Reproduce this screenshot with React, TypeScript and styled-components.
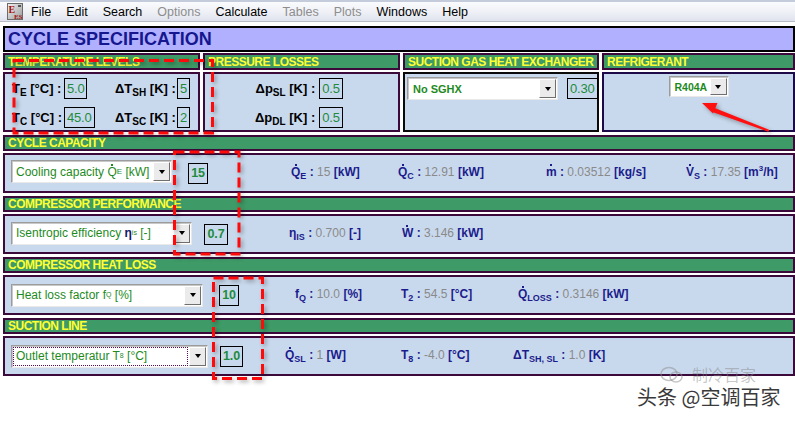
import React from "react";
import styled, { createGlobalStyle } from "styled-components";

const C = {
  purple: "#3b0a3b",
  green: "#3e9a66",
  yellow: "#ffff33",
  body: "#c9d9ed",
  navy: "#1c1c8c",
  val: "#1e8b3c",
  drop: "#1e8a1e",
  gray: "#8a8a8a",
};

const GlobalStyle = createGlobalStyle`
  html, body { margin: 0; padding: 0; background: #fff; }
  body { font-family: "Liberation Sans", Arial, sans-serif; }
`;

const Page = styled.div`
  position: relative;
  width: 795px;
  height: 421px;
  overflow: hidden;
  background: #fff;
`;

const MenuBar = styled.div`
  height: 22px;
  box-sizing: border-box;
  display: flex;
  align-items: center;
  padding-left: 7px;
  gap: 15px;
  background: linear-gradient(#fafbfd, #eef0f6 55%, #dfe3ed);
  border-top: 2px solid #c4ccdb;
  border-bottom: 1px solid #b9bdc8;
`;

const LogoBox = styled.svg`
  width: 16px;
  height: 17px;
  flex-shrink: 0;
  margin-right: -7px;
`;

const MenuItem = styled.span<{ $disabled?: boolean }>`
  font-size: 12.5px;
  color: ${(p) => (p.$disabled ? "#8d8d8d" : "#000")};
  white-space: nowrap;
`;

const Main = styled.div`
  display: flex;
  flex-direction: column;
  gap: 1px;
  width: 792px;
  padding: 4px 0 0 3px;
`;

const TitleBar = styled.div`
  height: 26px;
  box-sizing: border-box;
  border: 2px solid #000;
  background: #b0b0ff;
  display: flex;
  align-items: center;
  padding-left: 3px;
  font-size: 18px;
  font-weight: bold;
  color: #16168e;
`;

const Rows = styled.div`
  display: flex;
  flex-direction: column;
  gap: 3px;
`;

const TopRow = styled.div`
  display: grid;
  grid-template-columns: 197px 197px 196px 1fr;
  column-gap: 3px;
`;

const Section = styled.section`
  display: flex;
  flex-direction: column;
  gap: 2px;
  min-width: 0;
`;

const SectionHeader = styled.div<{ $h: number }>`
  height: ${(p) => p.$h}px;
  box-sizing: border-box;
  border: 2px solid ${C.purple};
  background: ${C.green};
  color: ${C.yellow};
  font-size: 12px;
  font-weight: bold;
  letter-spacing: -0.5px;
  padding-left: 3px;
  display: flex;
  align-items: center;
  white-space: nowrap;
  overflow: hidden;
`;

const PanelBody = styled.div<{ $h: number; $border?: string }>`
  height: ${(p) => p.$h}px;
  box-sizing: border-box;
  border: 2px solid ${(p) => p.$border || C.purple};
  background: ${C.body};
`;

const TempGrid = styled.div`
  display: grid;
  grid-template-columns: 52px 51px 62px auto;
  row-gap: 8px;
  align-items: center;
  padding: 4px 0 0 7px;
`;

const PressGrid = styled.div`
  display: grid;
  grid-template-columns: auto auto;
  column-gap: 4px;
  row-gap: 8px;
  align-items: center;
  justify-content: start;
  padding: 4px 0 0 50px;
`;

const FieldLabel = styled.span<{ $right?: boolean }>`
  font-size: 13px;
  font-weight: bold;
  color: #000;
  white-space: nowrap;
  justify-self: ${(p) => (p.$right ? "end" : "start")};
`;

const Sub = styled.span<{ $size?: number }>`
  font-size: ${(p) => p.$size || 9}px;
  vertical-align: -3px;
  line-height: 0;
`;

const Sup = styled.span`
  font-size: 8px;
  vertical-align: 5px;
  line-height: 0;
`;

const Dot = styled.span`
  position: relative;
  display: inline-block;
  &::after {
    content: "";
    position: absolute;
    left: 38%;
    top: -1px;
    width: 2px;
    height: 2px;
    background: currentColor;
  }
`;

const ValueBox = styled.span<{ $w?: number; $bold?: boolean; $ml?: number; $mt?: number }>`
  display: inline-flex;
  align-items: center;
  justify-content: center;
  justify-self: start;
  flex-shrink: 0;
  box-sizing: border-box;
  height: 21px;
  ${(p) => (p.$w ? `width: ${p.$w}px;` : "padding: 0 2px;")}
  margin-left: ${(p) => p.$ml || 0}px;
  margin-top: ${(p) => p.$mt || 0}px;
  border: 1px solid #000;
  font-size: ${(p) => (p.$bold ? 12.5 : 13)}px;
  font-weight: ${(p) => (p.$bold ? "bold" : "normal")};
  letter-spacing: -0.2px;
  color: ${C.val};
`;

const Select = styled.div<{ $w: number; $h?: number; $mb?: number }>`
  display: flex;
  flex-shrink: 0;
  width: ${(p) => p.$w}px;
  height: ${(p) => p.$h || 23}px;
  margin-bottom: ${(p) => p.$mb || 0}px;
  box-sizing: border-box;
  background: #fff;
  border: 1px solid;
  border-color: #9c9c9c #e9e9e9 #e9e9e9 #9c9c9c;
  box-shadow: inset 1px 1px 0 #c8c8c8;
`;

const SelectText = styled.div<{ $bold?: boolean; $focus?: boolean; $size?: number }>`
  flex: 1;
  min-width: 0;
  display: flex;
  align-items: center;
  margin: 2px 1px 2px 2px;
  padding-left: ${(p) => (p.$bold ? 3 : 2)}px;
  font-size: ${(p) => p.$size || 12}px;
  font-weight: ${(p) => (p.$bold ? "bold" : "normal")};
  color: ${C.drop};
  white-space: nowrap;
  overflow: hidden;
  outline: ${(p) => (p.$focus ? "1px dotted #5a0a5a" : "none")};
`;

const SelectButton = styled.div`
  width: 17px;
  flex-shrink: 0;
  margin: 1px;
  box-sizing: border-box;
  background: #ebebeb;
  border: 1px solid;
  border-color: #fff #6f6f6f #6f6f6f #fff;
  display: flex;
  align-items: center;
  justify-content: center;
`;

const Tri = styled.span`
  width: 0;
  height: 0;
  border-left: 3.5px solid transparent;
  border-right: 3.5px solid transparent;
  border-top: 4px solid #000;
`;

const Eta = styled.span`
  font-weight: bold;
  color: #15156a;
`;

const SghxRow = styled.div`
  display: flex;
  align-items: flex-start;
  padding: 3px 0 0 2px;
  gap: 9px;
`;

const RefRow = styled.div`
  display: flex;
  justify-content: center;
  padding-top: 2px;
`;

const CalcRow = styled.div`
  display: flex;
  align-items: center;
  height: 100%;
  padding-left: 6px;
`;

const Result = styled.span<{ $w?: number; $ml?: number }>`
  flex-shrink: 0;
  ${(p) => (p.$w ? `width: ${p.$w}px;` : "")}
  margin-left: ${(p) => p.$ml || 0}px;
  font-size: 12px;
  font-weight: bold;
  color: ${C.navy};
  white-space: nowrap;
  margin-bottom: 2px;
`;

const Num = styled.span`
  font-weight: normal;
  color: ${C.gray};
`;

const Overlay = styled.svg`
  position: absolute;
  left: 0;
  top: 0;
  width: 795px;
  height: 421px;
  pointer-events: none;
  filter: drop-shadow(2px 2px 2px rgba(0, 0, 0, 0.35));
`;

const Watermark = styled.div`
  position: absolute;
  left: 637px;
  top: 384px;
  font-family: "Noto Sans CJK SC", sans-serif;
  font-size: 20px;
  line-height: 25px;
  color: #3a3a3a;
  text-shadow: 0 0 2px #fff, 0 0 2px #fff;
  white-space: nowrap;
`;

const WatermarkFaint = styled.div`
  position: absolute;
  left: 660px;
  top: 366px;
  display: flex;
  align-items: center;
  gap: 8px;
  font-family: "Noto Sans CJK SC", sans-serif;
  font-size: 16px;
  line-height: 17px;
  color: rgba(130, 130, 130, 0.45);
  white-space: nowrap;
`;

const FaintIcon = styled.svg`
  width: 24px;
  height: 17px;
`;

const Logo = () => (
  <LogoBox viewBox="0 0 16 17">
    <defs>
      <linearGradient id="lg" x1="0" y1="0" x2="1" y2="1">
        <stop offset="0" stopColor="#f2f2f2" />
        <stop offset="1" stopColor="#9a9a9a" />
      </linearGradient>
    </defs>
    <rect x="0.5" y="0.5" width="15" height="16" fill="url(#lg)" stroke="#6b6b6b" />
    <text x="1.5" y="10" fontSize="10" fontFamily="Liberation Serif, serif" fill="#a31010" fontWeight="bold">E</text>
    <text x="7" y="15.5" fontSize="7" fontFamily="Liberation Serif, serif" fill="#a31010" fontWeight="bold">ES</text>
    <rect x="11" y="2" width="3" height="2" fill="#555" />
  </LogoBox>
);

const Drop = ({
  w,
  h,
  mb,
  bold,
  focus,
  size,
  children,
}: {
  w: number;
  h?: number;
  mb?: number;
  bold?: boolean;
  focus?: boolean;
  size?: number;
  children: React.ReactNode;
}) => (
  <Select $w={w} $h={h} $mb={mb}>
    <SelectText $bold={bold} $focus={focus} $size={size}>
      {children}
    </SelectText>
    <SelectButton>
      <Tri />
    </SelectButton>
  </Select>
);

const menu: [string, boolean][] = [
  ["File", false],
  ["Edit", false],
  ["Search", false],
  ["Options", true],
  ["Calculate", false],
  ["Tables", true],
  ["Plots", true],
  ["Windows", false],
  ["Help", false],
];

export default function App() {
  return (
    <>
      <GlobalStyle />
      <Page>
        <MenuBar>
          <Logo />
          {menu.map(([m, d]) => (
            <MenuItem key={m} $disabled={d}>
              {m}
            </MenuItem>
          ))}
        </MenuBar>
        <Main>
          <TitleBar>CYCLE SPECIFICATION</TitleBar>
          <Rows>
            <TopRow>
              <Section>
                <SectionHeader $h={17}>TEMPERATURE LEVELS</SectionHeader>
                <PanelBody $h={60}>
                  <TempGrid>
                    <FieldLabel>
                      T<Sub $size={10}>E</Sub> [°C] :
                    </FieldLabel>
                    <ValueBox>5.0</ValueBox>
                    <FieldLabel>
                      ΔT<Sub $size={10}>SH</Sub> [K] :
                    </FieldLabel>
                    <ValueBox>5</ValueBox>
                    <FieldLabel>
                      T<Sub $size={10}>C</Sub> [°C] :
                    </FieldLabel>
                    <ValueBox>45.0</ValueBox>
                    <FieldLabel>
                      ΔT<Sub $size={10}>SC</Sub> [K] :
                    </FieldLabel>
                    <ValueBox>2</ValueBox>
                  </TempGrid>
                </PanelBody>
              </Section>
              <Section>
                <SectionHeader $h={17}>PRESSURE LOSSES</SectionHeader>
                <PanelBody $h={60}>
                  <PressGrid>
                    <FieldLabel $right>
                      Δp<Sub $size={10}>SL</Sub> [K] :
                    </FieldLabel>
                    <ValueBox>0.5</ValueBox>
                    <FieldLabel $right>
                      Δp<Sub $size={10}>DL</Sub> [K] :
                    </FieldLabel>
                    <ValueBox>0.5</ValueBox>
                  </PressGrid>
                </PanelBody>
              </Section>
              <Section>
                <SectionHeader $h={17}>SUCTION GAS HEAT EXCHANGER</SectionHeader>
                <PanelBody $h={60} $border="#0a0a0a">
                  <SghxRow>
                    <Drop w={151} bold size={11}>
                      No SGHX
                    </Drop>
                    <ValueBox $mt={1}>0.30</ValueBox>
                  </SghxRow>
                </PanelBody>
              </Section>
              <Section>
                <SectionHeader $h={17}>REFRIGERANT</SectionHeader>
                <PanelBody $h={60} $border="#1e0a48">
                  <RefRow>
                    <Drop w={60} h={21} bold size={10.5}>
                      R404A
                    </Drop>
                  </RefRow>
                </PanelBody>
              </Section>
            </TopRow>

            <Section>
              <SectionHeader $h={16}>CYCLE CAPACITY</SectionHeader>
              <PanelBody $h={40}>
                <CalcRow>
                  <Drop w={161} mb={3}>
                    Cooling capacity&nbsp;<Dot>Q</Dot>
                    <Sub $size={8}>E</Sub>&nbsp;[kW]
                  </Drop>
                  <ValueBox $bold $w={20} $ml={16}>
                    15
                  </ValueBox>
                  <Result $ml={83} $w={107}>
                    <Dot>Q</Dot>
                    <Sub>E</Sub> : <Num>15</Num> [kW]
                  </Result>
                  <Result $w={148}>
                    <Dot>Q</Dot>
                    <Sub>C</Sub> : <Num>12.91</Num> [kW]
                  </Result>
                  <Result $w={140}>
                    <Dot>m</Dot> : <Num>0.03512</Num> [kg/s]
                  </Result>
                  <Result>
                    <Dot>V</Dot>
                    <Sub>S</Sub> : <Num>17.35</Num> [m<Sup>3</Sup>/h]
                  </Result>
                </CalcRow>
              </PanelBody>
            </Section>

            <Section>
              <SectionHeader $h={16}>COMPRESSOR PERFORMANCE</SectionHeader>
              <PanelBody $h={40}>
                <CalcRow>
                  <Drop w={181} mb={2}>
                    Isentropic efficiency&nbsp;<Eta>η</Eta>
                    <Sub $size={7}>is</Sub>&nbsp;[-]
                  </Drop>
                  <ValueBox $bold $w={24} $ml={12}>
                    0.7
                  </ValueBox>
                  <Result $ml={61} $w={113}>
                    η<Sub>IS</Sub> : <Num>0.700</Num> [-]
                  </Result>
                  <Result>
                    <Dot>W</Dot> : <Num>3.146</Num> [kW]
                  </Result>
                </CalcRow>
              </PanelBody>
            </Section>

            <Section>
              <SectionHeader $h={16}>COMPRESSOR HEAT LOSS</SectionHeader>
              <PanelBody $h={40}>
                <CalcRow>
                  <Drop w={192}>
                    Heat loss factor f<Sub $size={7}>Q</Sub>&nbsp;[%]
                  </Drop>
                  <ValueBox $bold $w={20} $ml={16}>
                    10
                  </ValueBox>
                  <Result $ml={56} $w={106}>
                    f<Sub>Q</Sub> : <Num>10.0</Num> [%]
                  </Result>
                  <Result $w={117}>
                    T<Sub>2</Sub> : <Num>54.5</Num> [°C]
                  </Result>
                  <Result>
                    <Dot>Q</Dot>
                    <Sub>LOSS</Sub> : <Num>0.3146</Num> [kW]
                  </Result>
                </CalcRow>
              </PanelBody>
            </Section>

            <Section>
              <SectionHeader $h={16}>SUCTION LINE</SectionHeader>
              <PanelBody $h={40}>
                <CalcRow>
                  <Drop w={197} focus>
                    Outlet temperatur T<Sub $size={7}>8</Sub>&nbsp;[°C]
                  </Drop>
                  <ValueBox $bold $w={23} $ml={12}>
                    1.0
                  </ValueBox>
                  <Result $ml={42} $w={116}>
                    <Dot>Q</Dot>
                    <Sub>SL</Sub> : <Num>1</Num> [W]
                  </Result>
                  <Result $w={112}>
                    T<Sub>8</Sub> : <Num>-4.0</Num> [°C]
                  </Result>
                  <Result>
                    ΔT<Sub>SH, SL</Sub> : <Num>1.0</Num> [K]
                  </Result>
                </CalcRow>
              </PanelBody>
            </Section>
          </Rows>
        </Main>

        <Overlay viewBox="0 0 795 421">
          <g fill="none" stroke="#ff0a0a" strokeWidth="3" strokeDasharray="10 5">
            <rect x="14" y="60.5" width="198.5" height="72.5" />
            <rect x="174.5" y="152" width="64.5" height="102" />
            <rect x="213.5" y="278" width="49" height="100.5" />
          </g>
          <path d="M768 130.5 L713 108.5 L713.5 111.2 Z" fill="#ff1010" stroke="#ff1010" strokeWidth="2.2" strokeLinejoin="round" />
          <polygon points="702,103 717.5,103 713,113.5" fill="#ff1010" />
        </Overlay>

        <WatermarkFaint>
          <FaintIcon viewBox="0 0 24 17">
            <ellipse cx="9" cy="8" rx="8" ry="6.5" fill="none" stroke="rgba(140,140,140,0.5)" strokeWidth="1.5" />
            <ellipse cx="16" cy="11" rx="6" ry="5" fill="none" stroke="rgba(140,140,140,0.5)" strokeWidth="1.5" />
          </FaintIcon>
          <span>制冷百家</span>
        </WatermarkFaint>
        <Watermark>头条 @空调百家</Watermark>
      </Page>
    </>
  );
}
